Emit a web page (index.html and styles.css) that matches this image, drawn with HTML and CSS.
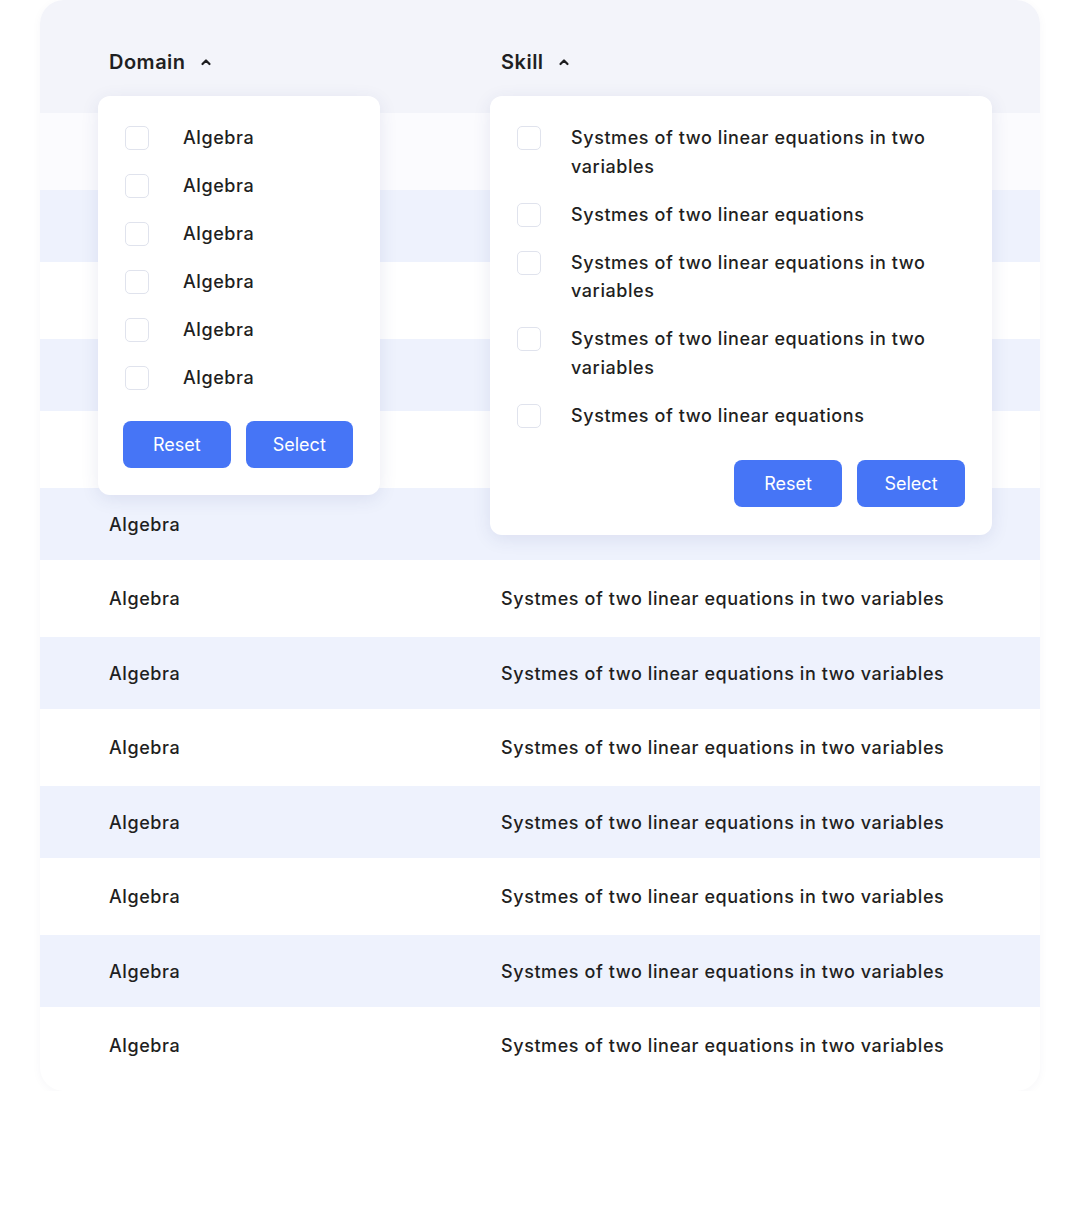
FILE: index.html
```html
<!DOCTYPE html>
<html lang="en">
<head>
    <meta charset="UTF-8">
    <meta name="viewport" content="width=device-width, initial-scale=1.0">
    <title>Skills</title>
    <link rel="stylesheet" href="styles.css">
</head>
<body>
    <div class="card">
        <table class="skills">
            <thead>
                <tr>
                    <th class="col-domain">
                        <span class="head-label">Domain
                            <svg class="caret" width="12" height="8" viewBox="0 0 12 8"><polyline points="2.5,6 6,2.5 9.5,6" fill="none" stroke="#1d1d1f" stroke-width="2.2" stroke-linecap="round" stroke-linejoin="round"/></svg>
                        </span>
                        <div class="filter filter-domain">
                            <ul class="options">
                                <li><span class="check"></span><span class="opt-text">Algebra</span></li>
                                <li><span class="check"></span><span class="opt-text">Algebra</span></li>
                                <li><span class="check"></span><span class="opt-text">Algebra</span></li>
                                <li><span class="check"></span><span class="opt-text">Algebra</span></li>
                                <li><span class="check"></span><span class="opt-text">Algebra</span></li>
                                <li><span class="check"></span><span class="opt-text">Algebra</span></li>
                            </ul>
                            <div class="actions">
                                <button>Reset</button>
                                <button>Select</button>
                            </div>
                        </div>
                    </th>
                    <th class="col-skill">
                        <span class="head-label">Skill
                            <svg class="caret" width="12" height="8" viewBox="0 0 12 8"><polyline points="2.5,6 6,2.5 9.5,6" fill="none" stroke="#1d1d1f" stroke-width="2.2" stroke-linecap="round" stroke-linejoin="round"/></svg>
                        </span>
                        <div class="filter filter-skill">
                            <ul class="options">
                                <li><span class="check"></span><span class="opt-text">Systmes of two linear equations in two variables</span></li>
                                <li><span class="check"></span><span class="opt-text">Systmes of two linear equations</span></li>
                                <li><span class="check"></span><span class="opt-text">Systmes of two linear equations in two variables</span></li>
                                <li><span class="check"></span><span class="opt-text">Systmes of two linear equations in two variables</span></li>
                                <li><span class="check"></span><span class="opt-text">Systmes of two linear equations</span></li>
                            </ul>
                            <div class="actions">
                                <button>Reset</button>
                                <button>Select</button>
                            </div>
                        </div>
                    </th>
                </tr>
            </thead>
            <tbody>
                <tr><td>Algebra</td><td>Systmes of two linear equations in two variables</td></tr>
                <tr><td>Algebra</td><td>Systmes of two linear equations in two variables</td></tr>
                <tr><td>Algebra</td><td>Systmes of two linear equations in two variables</td></tr>
                <tr><td>Algebra</td><td>Systmes of two linear equations in two variables</td></tr>
                <tr><td>Algebra</td><td>Systmes of two linear equations in two variables</td></tr>
                <tr><td>Algebra</td><td>Systmes of two linear equations in two variables</td></tr>
                <tr><td>Algebra</td><td>Systmes of two linear equations in two variables</td></tr>
                <tr><td>Algebra</td><td>Systmes of two linear equations in two variables</td></tr>
                <tr><td>Algebra</td><td>Systmes of two linear equations in two variables</td></tr>
                <tr><td>Algebra</td><td>Systmes of two linear equations in two variables</td></tr>
                <tr><td>Algebra</td><td>Systmes of two linear equations in two variables</td></tr>
                <tr><td>Algebra</td><td>Systmes of two linear equations in two variables</td></tr>
                <tr><td>Algebra</td><td>Systmes of two linear equations in two variables</td></tr>
            </tbody>
        </table>
    </div>
</body>
</html>
```

FILE: styles.css
```css
body {
    margin: 0;
    background-color: #fff;
    font-family: Inter, "Noto Sans", sans-serif;
    color: #1f1f22;
}

.card {
    width: 1000px;
    margin: 0 40px;
    padding-bottom: 7px;
    background-color: #fff;
    border-radius: 24px;
    box-shadow: 0 2px 10px rgba(40, 50, 110, 0.04);
}

.skills {
    width: 100%;
    border-collapse: collapse;
    font-size: 18px;
    font-weight: 500;
    letter-spacing: 0.58px;
}

.skills thead th {
    position: relative;
    height: 102px;
    padding: 11px 0 0 0;
    text-align: left;
    font-size: 20px;
    font-weight: 600;
    letter-spacing: 0.5px;
    background-color: #f3f4fa;
    vertical-align: middle;
}

.skills th.col-domain {
    width: 392px;
    padding-left: 69px;
    border-top-left-radius: 24px;
}

.skills th.col-skill {
    border-top-right-radius: 24px;
}

.head-label {
    display: inline-flex;
    align-items: center;
    gap: 14px;
}

.skills td {
    padding: 0;
    vertical-align: middle;
}

.skills td:first-child {
    padding-left: 69px;
}

.skills tbody tr:nth-child(odd) {
    height: 77px;
}

.skills tbody tr:nth-child(even) {
    height: 72px;
    background-color: #eef2fd;
}

.skills tbody tr:first-child {
    background-color: #fbfbfe;
}

/* dropdown filters */
.filter {
    position: absolute;
    top: 96px;
    z-index: 2;
    box-sizing: border-box;
    padding: 27px;
    background-color: #fff;
    border-radius: 12px;
    box-shadow: 0 4px 18px rgba(50, 60, 130, 0.10);
    font-size: 18px;
    font-weight: 500;
    letter-spacing: 0.58px;
}

.filter-domain {
    left: 58px;
    width: 282px;
    padding-top: 28px;
}

.filter-skill {
    left: -11px;
    width: 502px;
    padding-top: 28px;
    padding-bottom: 28px;
}

.options {
    list-style: none;
    margin: 0;
    padding: 0;
    display: flex;
    flex-direction: column;
    gap: 20px;
}

.filter-skill .options {
    gap: 19.5px;
}

.options li {
    display: flex;
    align-items: flex-start;
    line-height: 28px;
}

.filter-skill .options li {
    line-height: 28.5px;
}

.check {
    flex: none;
    box-sizing: border-box;
    width: 24px;
    height: 24px;
    margin-top: 2px;
    border: 1.5px solid #e0e3ed;
    border-radius: 5px;
    background-color: #fff;
}

.filter-domain .check {
    margin-right: 34px;
}

.filter-skill .check {
    margin-right: 30px;
}

.actions {
    display: flex;
    justify-content: flex-end;
    gap: 15px;
    margin-top: 30px;
}

.filter-domain .actions {
    justify-content: flex-start;
    margin-left: -2px;
    margin-top: 29px;
}

.actions button {
    width: 108px;
    height: 47px;
    border: none;
    border-radius: 8px;
    background-color: #4675f6;
    color: #fff;
    font-family: Inter, "Noto Sans", sans-serif;
    font-size: 18px;
    font-weight: 400;
    cursor: pointer;
}
```
